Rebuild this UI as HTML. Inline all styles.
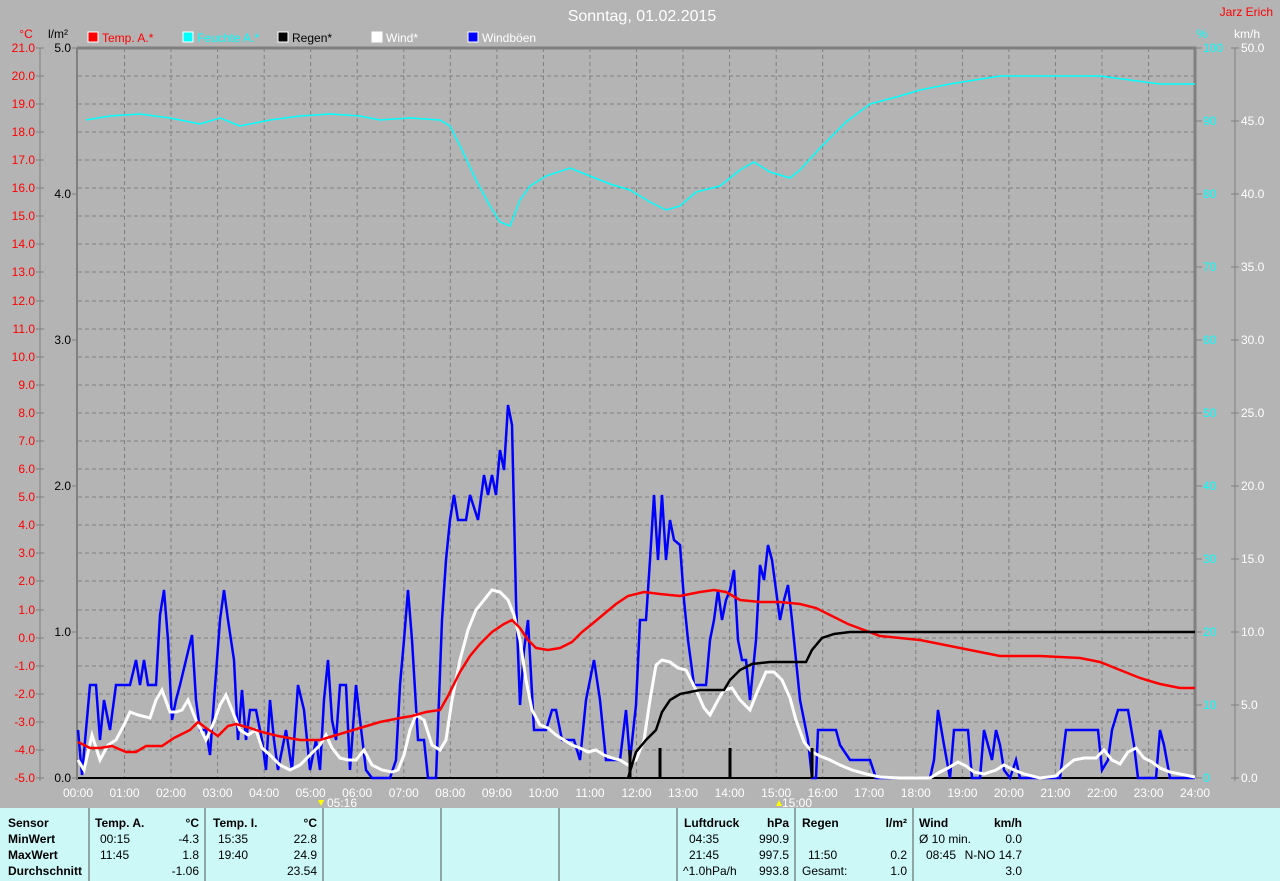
<!DOCTYPE html>
<html><head><meta charset="utf-8"><style>
html,body{margin:0;padding:0;background:#b4b4b4;}
svg{display:block;font-family:"Liberation Sans",sans-serif;}
</style></head><body>
<svg width="1280" height="881" viewBox="0 0 1280 881" xmlns="http://www.w3.org/2000/svg">
<rect width="1280" height="881" fill="#b4b4b4"/>
<text x="642" y="21" fill="#fff" font-size="16" text-anchor="middle">Sonntag, 01.02.2015</text>
<text x="1273" y="16" fill="#f00" font-size="12" text-anchor="end">Jarz Erich</text>
<!-- axis headers -->
<text x="26" y="38" fill="#f00" font-size="12" text-anchor="middle">°C</text>
<text x="58" y="38" fill="#000" font-size="12" text-anchor="middle">l/m²</text>
<text x="1202" y="38" fill="#0ff" font-size="12" text-anchor="middle">%</text>
<text x="1247" y="38" fill="#fff" font-size="12" text-anchor="middle">km/h</text>
<!-- legend -->
<g font-size="12">
<rect x="88" y="32" width="10" height="10" fill="#f00" stroke="#fff"/><text x="102" y="42" fill="#f00">Temp. A.*</text>
<rect x="183" y="32" width="10" height="10" fill="#0ff" stroke="#fff"/><text x="197" y="42" fill="#0ff">Feuchte A.*</text>
<rect x="278" y="32" width="10" height="10" fill="#000" stroke="#fff"/><text x="292" y="42" fill="#000">Regen*</text>
<rect x="372" y="32" width="10" height="10" fill="#fff" stroke="#fff"/><text x="386" y="42" fill="#fff">Wind*</text>
<rect x="468" y="32" width="10" height="10" fill="#00f" stroke="#fff"/><text x="482" y="42" fill="#fff">Windböen</text>
</g>
<!-- grid -->
<g stroke="#808080" stroke-dasharray="4,3" stroke-width="1">
<path d="M78 76H1195M78 104H1195M78 132H1195M78 160H1195M78 188H1195M78 216H1195M78 244H1195M78 272H1195M78 301H1195M78 329H1195M78 357H1195M78 385H1195M78 413H1195M78 441H1195M78 469H1195M78 497H1195M78 525H1195M78 553H1195M78 581H1195M78 610H1195M78 638H1195M78 666H1195M78 694H1195M78 722H1195M78 750H1195"/>
<path d="M124.5 48V778M171 48V778M217.6 48V778M264.2 48V778M310.7 48V778M357.2 48V778M403.8 48V778M450.3 48V778M496.9 48V778M543.4 48V778M590 48V778M636.5 48V778M683 48V778M729.6 48V778M776.2 48V778M822.7 48V778M869.2 48V778M915.8 48V778M962.4 48V778M1008.9 48V778M1055.4 48V778M1102 48V778M1148.6 48V778"/>
</g>
<path d="M77 48H1195V778" stroke="#808080" stroke-width="3" fill="none"/>
<path d="M77 48V780" stroke="#808080" stroke-width="2"/>
<path d="M78 778H1195" stroke="#000" stroke-width="2"/>
<!-- left axes -->
<path d="M40 48V781M1235 48V781" stroke="#808080"/>
<g stroke="#808080"><path d="M36 48h8M36 76h8M36 104h8M36 132h8M36 160h8M36 188h8M36 216h8M36 244h8M36 272h8M36 301h8M36 329h8M36 357h8M36 385h8M36 413h8M36 441h8M36 469h8M36 497h8M36 525h8M36 553h8M36 581h8M36 610h8M36 638h8M36 666h8M36 694h8M36 722h8M36 750h8M36 778h8"/>
<path d="M72 48h5M72 194h5M72 340h5M72 486h5M72 632h5M72 778h5"/>
<path d="M1196 48h6M1196 121h6M1196 194h6M1196 267h6M1196 340h6M1196 413h6M1196 486h6M1196 559h6M1196 632h6M1196 705h6M1196 778h6"/>
<path d="M1231 48h8M1231 121h8M1231 194h8M1231 267h8M1231 340h8M1231 413h8M1231 486h8M1231 559h8M1231 632h8M1231 705h8M1231 778h8"/></g>
<g fill="#f00" font-size="12" text-anchor="end">
<text x="35" y="52">21.0</text><text x="35" y="80">20.0</text><text x="35" y="108">19.0</text><text x="35" y="136">18.0</text><text x="35" y="164">17.0</text><text x="35" y="192">16.0</text><text x="35" y="220">15.0</text><text x="35" y="248">14.0</text><text x="35" y="276">13.0</text><text x="35" y="305">12.0</text><text x="35" y="333">11.0</text><text x="35" y="361">10.0</text><text x="35" y="389">9.0</text><text x="35" y="417">8.0</text><text x="35" y="445">7.0</text><text x="35" y="473">6.0</text><text x="35" y="501">5.0</text><text x="35" y="529">4.0</text><text x="35" y="557">3.0</text><text x="35" y="585">2.0</text><text x="35" y="614">1.0</text><text x="35" y="642">0.0</text><text x="35" y="670">-1.0</text><text x="35" y="698">-2.0</text><text x="35" y="726">-3.0</text><text x="35" y="754">-4.0</text><text x="35" y="782">-5.0</text>
</g>
<g fill="#000" font-size="12" text-anchor="end">
<text x="71" y="52">5.0</text><text x="71" y="198">4.0</text><text x="71" y="344">3.0</text><text x="71" y="490">2.0</text><text x="71" y="636">1.0</text><text x="71" y="782">0.0</text>
</g>
<g fill="#0ff" font-size="12">
<text x="1203" y="52">100</text><text x="1203" y="125">90</text><text x="1203" y="198">80</text><text x="1203" y="271">70</text><text x="1203" y="344">60</text><text x="1203" y="417">50</text><text x="1203" y="490">40</text><text x="1203" y="563">30</text><text x="1203" y="636">20</text><text x="1203" y="709">10</text><text x="1203" y="782">0</text>
</g>
<g fill="#fff" font-size="12">
<text x="1241" y="52">50.0</text><text x="1241" y="125">45.0</text><text x="1241" y="198">40.0</text><text x="1241" y="271">35.0</text><text x="1241" y="344">30.0</text><text x="1241" y="417">25.0</text><text x="1241" y="490">20.0</text><text x="1241" y="563">15.0</text><text x="1241" y="636">10.0</text><text x="1241" y="709">5.0</text><text x="1241" y="782">0.0</text>
</g>
<!-- time labels -->
<g fill="#fff" font-size="12" text-anchor="middle">
<text x="78" y="797">00:00</text><text x="124.5" y="797">01:00</text><text x="171" y="797">02:00</text><text x="217.6" y="797">03:00</text><text x="264.2" y="797">04:00</text><text x="310.7" y="797">05:00</text><text x="357.2" y="797">06:00</text><text x="403.8" y="797">07:00</text><text x="450.3" y="797">08:00</text><text x="496.9" y="797">09:00</text><text x="543.4" y="797">10:00</text><text x="590" y="797">11:00</text><text x="636.5" y="797">12:00</text><text x="683" y="797">13:00</text><text x="729.6" y="797">14:00</text><text x="776.2" y="797">15:00</text><text x="822.7" y="797">16:00</text><text x="869.2" y="797">17:00</text><text x="915.8" y="797">18:00</text><text x="962.4" y="797">19:00</text><text x="1008.9" y="797">20:00</text><text x="1055.4" y="797">21:00</text><text x="1102" y="797">22:00</text><text x="1148.6" y="797">23:00</text><text x="1195" y="797">24:00</text>
<text x="342" y="807">05:16</text><text x="797" y="807">15:00</text>
</g>
<path d="M318 800l3 6 3-6z" fill="#ff0"/><path d="M776 806l3-6 3 6z" fill="#ff0"/>
<!-- curves -->
<polyline fill="none" stroke="#0ff" stroke-width="1.5" points="86,120 110,116 140,114 170,118 200,124 220,118 240,126 270,120 300,116 330,114 360,116 380,120 410,118 440,120 450,126 462,150 476,180 490,206 500,222 510,226 520,200 530,186 546,176 570,168 590,176 610,184 630,190 650,202 666,210 680,206 696,192 720,186 740,170 754,162 770,172 790,178 800,170 820,148 846,122 870,104 900,96 920,90 950,84 1000,76 1050,76 1100,76 1130,80 1160,84 1195,84"/>
<polyline fill="none" stroke="#00f" stroke-width="2.5" points="78,730 82,775 90,685 96,685 100,740 104,700 110,730 116,685 122,685 130,685 136,660 140,685 144,660 148,685 156,685 160,615 164,590 168,640 172,720 176,700 180,685 186,660 192,635 196,700 200,730 206,730 210,755 214,700 220,620 224,590 228,620 234,660 238,740 242,690 246,740 250,710 256,710 262,740 266,770 270,700 274,740 278,770 286,730 292,770 298,685 304,710 310,770 316,740 320,770 324,700 328,660 332,720 336,740 340,685 346,685 350,770 356,685 360,720 366,770 372,778 390,778 396,760 400,685 404,640 408,590 412,640 418,740 424,740 428,778 436,778 442,620 446,560 450,520 454,495 458,520 466,520 470,495 478,520 484,475 488,495 492,475 496,495 500,450 504,470 508,405 512,425 516,600 520,705 524,650 528,620 534,730 546,730 552,710 556,710 562,740 574,740 580,760 586,700 594,660 600,700 606,760 620,760 626,710 630,760 636,705 640,620 646,620 650,560 654,495 658,560 662,495 666,560 670,520 674,540 680,545 684,600 688,640 694,685 706,685 710,640 714,620 718,590 722,620 726,600 730,590 734,570 738,640 742,660 746,660 750,700 756,640 760,565 764,580 768,545 772,560 776,590 780,620 784,600 788,585 792,620 796,660 800,700 808,740 812,778 816,778 818,730 836,730 840,745 850,760 870,760 876,778 930,778 934,760 938,710 944,745 950,778 954,730 968,730 972,778 980,778 984,730 988,745 992,760 996,730 1000,745 1004,770 1010,778 1016,760 1020,778 1060,778 1066,730 1098,730 1102,770 1108,760 1112,730 1118,710 1128,710 1134,745 1138,778 1156,778 1160,730 1164,745 1170,778 1195,778"/>
<polyline fill="none" stroke="#fff" stroke-width="3" points="78,760 84,770 92,735 100,760 108,745 116,740 124,725 130,712 138,715 150,718 156,700 162,690 170,712 176,712 182,710 188,700 196,720 206,740 214,722 220,705 226,695 234,715 240,730 248,735 256,730 262,748 270,755 280,765 290,770 300,765 310,755 320,745 326,735 332,748 340,758 348,760 356,760 364,750 372,765 382,770 392,772 398,770 404,755 410,730 416,715 424,720 432,745 440,750 446,740 452,700 460,660 468,630 476,610 484,600 492,590 500,592 508,600 514,615 520,640 526,680 532,710 540,725 548,728 556,735 564,740 572,745 580,748 588,752 596,750 604,755 612,758 620,760 628,765 636,760 644,740 650,700 656,665 662,660 670,662 678,668 686,670 696,690 704,708 710,715 718,700 724,690 732,688 740,700 750,710 758,690 766,672 774,672 782,680 790,698 796,720 804,742 812,752 820,756 830,760 840,765 852,770 866,774 880,777 900,778 930,778 940,772 948,768 958,762 966,766 974,772 984,774 996,770 1004,765 1014,770 1024,774 1040,778 1056,776 1064,768 1074,760 1084,758 1096,758 1104,750 1112,760 1120,764 1128,752 1136,748 1144,758 1152,762 1160,768 1170,772 1180,774 1195,777"/>
<polyline fill="none" stroke="#f00" stroke-width="2.5" points="78,742 90,748 100,748 112,746 126,752 136,752 146,746 162,746 174,738 190,730 198,722 206,728 218,736 228,726 236,724 250,728 262,732 278,736 300,740 320,740 340,734 360,728 380,722 400,718 412,716 426,712 440,710 448,696 460,672 470,656 480,644 492,632 504,624 512,620 520,628 528,640 536,648 548,650 560,648 572,642 582,632 592,624 604,614 616,604 628,596 644,592 660,594 680,596 700,592 714,590 726,592 740,600 760,602 780,602 800,604 816,608 832,616 848,624 864,630 880,636 900,638 920,640 940,644 960,648 980,652 1000,656 1040,656 1080,658 1100,662 1120,670 1140,678 1160,684 1180,688 1195,688"/>
<polyline fill="none" stroke="#000" stroke-width="2.5" points="628,778 636,752 646,740 656,730 662,712 670,700 680,694 700,690 724,690 730,680 740,670 752,664 770,662 806,662 812,650 822,638 834,634 850,632 1195,632"/>
<path d="M630 778V750M660 778V748M730 778V748M812 778V748" stroke="#000" stroke-width="3"/>
<!-- bottom panel -->
<rect x="0" y="808" width="1280" height="73" fill="#ccf8f8"/>
<path d="M89 808V881M205 808V881M323 808V881M441 808V881M559 808V881M677 808V881M795 808V881M913 808V881" stroke="#555"/>
<g font-size="12" fill="#000">
<g font-weight="bold"><text x="8" y="827">Sensor</text><text x="8" y="843">MinWert</text><text x="8" y="859">MaxWert</text><text x="8" y="875">Durchschnitt</text>
<text x="95" y="827">Temp. A.</text><text x="199" y="827" text-anchor="end">°C</text>
<text x="213" y="827">Temp. I.</text><text x="317" y="827" text-anchor="end">°C</text>
<text x="684" y="827">Luftdruck</text><text x="789" y="827" text-anchor="end">hPa</text>
<text x="802" y="827">Regen</text><text x="907" y="827" text-anchor="end">l/m²</text>
<text x="919" y="827">Wind</text><text x="1022" y="827" text-anchor="end">km/h</text></g>
<text x="100" y="843">00:15</text><text x="199" y="843" text-anchor="end">-4.3</text>
<text x="100" y="859">11:45</text><text x="199" y="859" text-anchor="end">1.8</text>
<text x="199" y="875" text-anchor="end">-1.06</text>
<text x="218" y="843">15:35</text><text x="317" y="843" text-anchor="end">22.8</text>
<text x="218" y="859">19:40</text><text x="317" y="859" text-anchor="end">24.9</text>
<text x="317" y="875" text-anchor="end">23.54</text>
<text x="689" y="843">04:35</text><text x="789" y="843" text-anchor="end">990.9</text>
<text x="689" y="859">21:45</text><text x="789" y="859" text-anchor="end">997.5</text>
<text x="683" y="875">^1.0hPa/h</text><text x="789" y="875" text-anchor="end">993.8</text>
<text x="808" y="859">11:50</text><text x="907" y="859" text-anchor="end">0.2</text>
<text x="802" y="875">Gesamt:</text><text x="907" y="875" text-anchor="end">1.0</text>
<text x="919" y="843">Ø 10 min.</text><text x="1022" y="843" text-anchor="end">0.0</text>
<text x="926" y="859">08:45</text><text x="1022" y="859" text-anchor="end">N-NO 14.7</text>
<text x="1022" y="875" text-anchor="end">3.0</text>
</g>
</svg>
</body></html>
